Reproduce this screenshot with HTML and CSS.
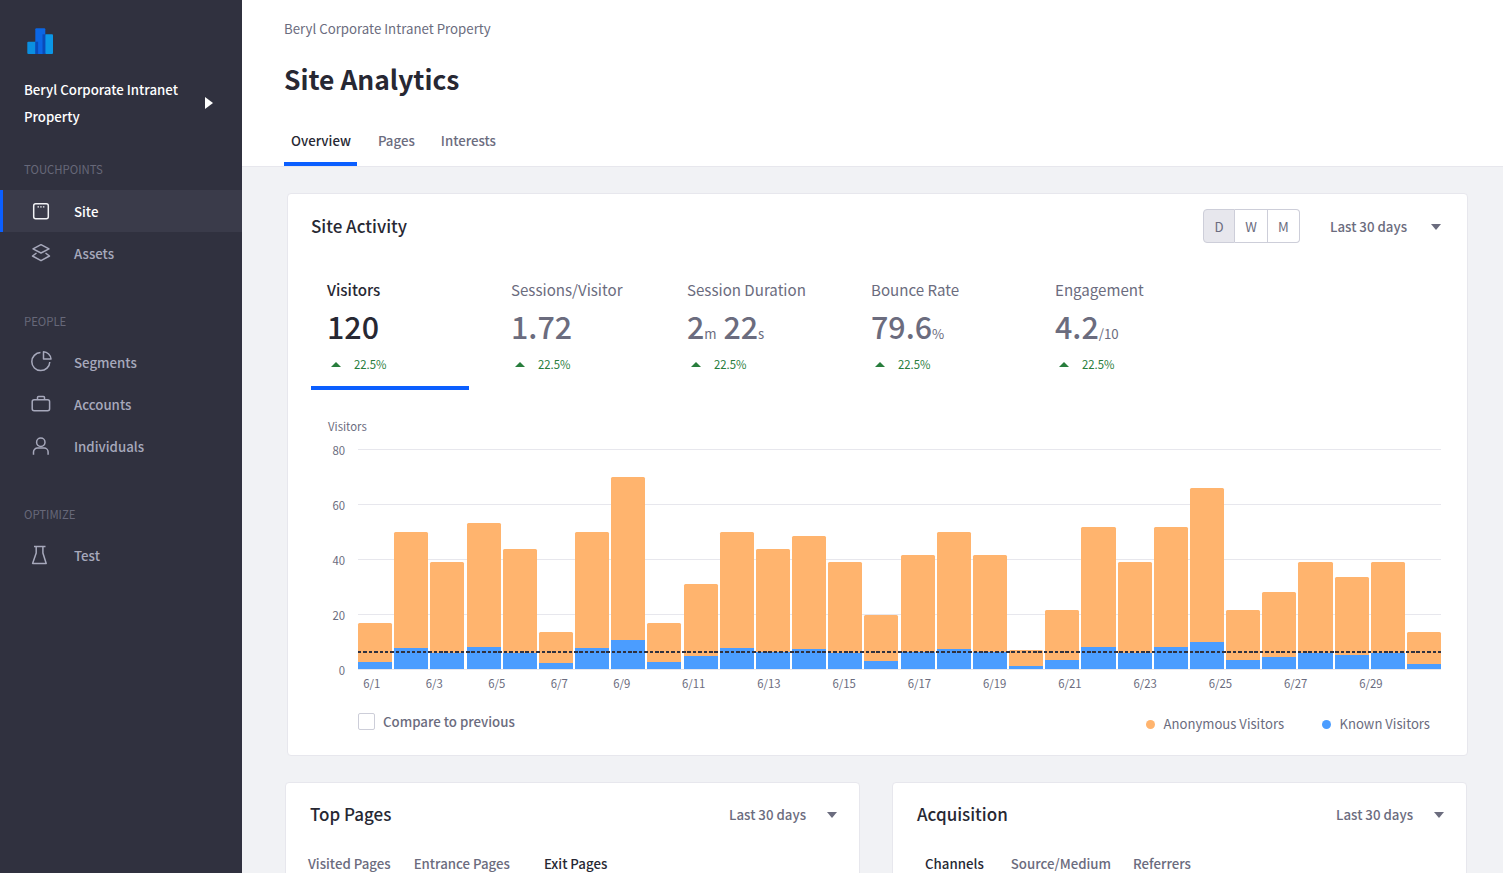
FILE: index.html
```html
<!DOCTYPE html>
<html lang="en">
<head>
<meta charset="utf-8">
<title>Site Analytics</title>
<link rel="stylesheet" href="styles.css">
</head>
<body>
<div class="app">
  <aside class="sidebar">
    <svg class="logo" width="26" height="26" viewBox="0 0 26 26"><rect x="0.3" y="13.7" width="9" height="12.3" rx="1" fill="#0b8fe0"/><rect x="18" y="6.3" width="8" height="19.7" rx="1" fill="#0b97e6"/><rect x="8.3" y="0.3" width="10" height="25.7" rx="1" fill="#0b66e4"/><rect x="8.3" y="13.7" width="2.8" height="12.3" fill="#0a4bb8"/><rect x="15.5" y="6.3" width="2.8" height="19.7" fill="#0a4bb8"/></svg>
    <div class="property">
      <div class="property-name">Beryl Corporate Intranet Property</div>
      <span class="property-caret"></span>
    </div>
    <div class="nav-label nav-label-first">TOUCHPOINTS</div>
    <a class="nav-item active"><svg class="nav-icon" width="22" height="22" viewBox="0 0 22 22"><rect x="3.7" y="3.7" width="14.6" height="15" rx="2"/><path class="dots" d="M7.5 6.9h7"/></svg>Site</a>
    <a class="nav-item"><svg class="nav-icon" width="22" height="22" viewBox="0 0 22 22"><path d="M11 2.7L19 6.9L11 11L3 6.9Z"/><path d="M6.5 11L2.5 14L11 18.7L19.5 14L15.5 11"/></svg>Assets</a>
    <div class="nav-label">PEOPLE</div>
    <a class="nav-item"><svg class="nav-icon" width="22" height="22" viewBox="0 0 22 22"><path d="M10.5 1.6A9 9 0 1 0 19.8 11"/><path d="M13.5 .8A7.7 7.7 0 0 1 21 8H13.5Z"/></svg>Segments</a>
    <a class="nav-item"><svg class="nav-icon" width="22" height="22" viewBox="0 0 22 22"><rect x="2.2" y="6.7" width="17.4" height="11" rx="2"/><path d="M7.5 6.5V4.5a1 1 0 0 1 1-1h5a1 1 0 0 1 1 1V6.5"/></svg>Accounts</a>
    <a class="nav-item"><svg class="nav-icon" width="22" height="22" viewBox="0 0 22 22"><circle cx="10.8" cy="7.3" r="4.2"/><path d="M3.5 19.7V17a4 4 0 0 1 4-4h6.6a4 4 0 0 1 4 4v2.7"/></svg>Individuals</a>
    <div class="nav-label">OPTIMIZE</div>
    <a class="nav-item"><svg class="nav-icon" width="22" height="22" viewBox="0 0 22 22"><path d="M4 2.4H15.5M6.2 2.4V9L2.6 19.4H16.2L12.9 9V2.4"/></svg>Test</a>
  </aside>

  <div class="content">
    <header class="page-header">
      <div class="breadcrumb">Beryl Corporate Intranet Property</div>
      <h1 class="page-title">Site Analytics</h1>
      <nav class="page-tabs">
        <a class="page-tab selected">Overview</a>
        <a class="page-tab">Pages</a>
        <a class="page-tab">Interests</a>
      </nav>
    </header>

    <main class="main">
      <section class="card activity">
        <div class="card-head">
          <h2 class="card-title">Site Activity</h2>
          <div class="card-tools">
            <div class="segmented">
              <span class="segment on">D</span><span class="segment">W</span><span class="segment">M</span>
            </div>
            <div class="range range-wide"><span>Last 30 days</span><i class="caret"></i></div>
          </div>
        </div>

        <div class="metrics">
          <div class="metric selected">
            <div class="metric-name">Visitors</div>
            <div class="metric-value">120</div>
            <div class="metric-delta"><i class="up"></i>22.5%</div>
          </div>
          <div class="metric">
            <div class="metric-name">Sessions/Visitor</div>
            <div class="metric-value">1.72</div>
            <div class="metric-delta"><i class="up"></i>22.5%</div>
          </div>
          <div class="metric">
            <div class="metric-name">Session Duration</div>
            <div class="metric-value">2<small>m</small> 22<small>s</small></div>
            <div class="metric-delta"><i class="up"></i>22.5%</div>
          </div>
          <div class="metric">
            <div class="metric-name">Bounce Rate</div>
            <div class="metric-value">79.6<small>%</small></div>
            <div class="metric-delta"><i class="up"></i>22.5%</div>
          </div>
          <div class="metric">
            <div class="metric-name">Engagement</div>
            <div class="metric-value">4.2<small>/10</small></div>
            <div class="metric-delta"><i class="up"></i>22.5%</div>
          </div>
        </div>

        <div class="chart">
          <div class="chart-label">Visitors</div>
          <div class="chart-body">
            <div class="y-axis"><span>80</span><span>60</span><span>40</span><span>20</span><span>0</span></div>
            <div class="plot">
              <div class="grid"><i></i><i></i><i></i><i></i><i></i></div>
              <div class="bars">
                <div class="bar" style="height:46px"><div class="known" style="height:7px"></div></div>
                <div class="bar" style="height:137px"><div class="known" style="height:21px"></div></div>
                <div class="bar" style="height:107px"><div class="known" style="height:16px"></div></div>
                <div class="bar" style="height:146px"><div class="known" style="height:22px"></div></div>
                <div class="bar" style="height:120px"><div class="known" style="height:16px"></div></div>
                <div class="bar" style="height:37px"><div class="known" style="height:6px"></div></div>
                <div class="bar" style="height:137px"><div class="known" style="height:21px"></div></div>
                <div class="bar" style="height:192px"><div class="known" style="height:29px"></div></div>
                <div class="bar" style="height:46px"><div class="known" style="height:7px"></div></div>
                <div class="bar" style="height:85px"><div class="known" style="height:13px"></div></div>
                <div class="bar" style="height:137px"><div class="known" style="height:21px"></div></div>
                <div class="bar" style="height:120px"><div class="known" style="height:17px"></div></div>
                <div class="bar" style="height:133px"><div class="known" style="height:20px"></div></div>
                <div class="bar" style="height:107px"><div class="known" style="height:16px"></div></div>
                <div class="bar" style="height:54px"><div class="known" style="height:8px"></div></div>
                <div class="bar" style="height:114px"><div class="known" style="height:17px"></div></div>
                <div class="bar" style="height:137px"><div class="known" style="height:20px"></div></div>
                <div class="bar" style="height:114px"><div class="known" style="height:17px"></div></div>
                <div class="bar" style="height:19px"><div class="known" style="height:3px"></div></div>
                <div class="bar" style="height:59px"><div class="known" style="height:9px"></div></div>
                <div class="bar" style="height:142px"><div class="known" style="height:22px"></div></div>
                <div class="bar" style="height:107px"><div class="known" style="height:16px"></div></div>
                <div class="bar" style="height:142px"><div class="known" style="height:22px"></div></div>
                <div class="bar" style="height:181px"><div class="known" style="height:27px"></div></div>
                <div class="bar" style="height:59px"><div class="known" style="height:9px"></div></div>
                <div class="bar" style="height:77px"><div class="known" style="height:12px"></div></div>
                <div class="bar" style="height:107px"><div class="known" style="height:16px"></div></div>
                <div class="bar" style="height:92px"><div class="known" style="height:14px"></div></div>
                <div class="bar" style="height:107px"><div class="known" style="height:16px"></div></div>
                <div class="bar" style="height:37px"><div class="known" style="height:5px"></div></div>
              </div>
              <div class="avg-line"></div>
            </div>
          </div>
          <div class="x-axis">
            <span class="tick">6/1</span><span class="tick">6/3</span><span class="tick">6/5</span><span class="tick">6/7</span><span class="tick">6/9</span>
            <span class="tick wide first-wide">6/11</span><span class="tick wide">6/13</span><span class="tick wide">6/15</span><span class="tick wide">6/17</span><span class="tick wide">6/19</span><span class="tick wide">6/21</span><span class="tick wide">6/23</span><span class="tick wide">6/25</span><span class="tick wide">6/27</span><span class="tick wide">6/29</span>
          </div>
          <div class="chart-foot">
            <label class="compare"><span class="checkbox"></span>Compare to previous</label>
            <div class="legend">
              <span class="legend-item"><i class="dot orange"></i>Anonymous Visitors</span>
              <span class="legend-item"><i class="dot blue"></i>Known Visitors</span>
            </div>
          </div>
        </div>
      </section>

      <div class="card-row">
        <section class="card small-card">
          <div class="card-head small-head">
            <h2 class="card-title">Top Pages</h2>
            <div class="range"><span>Last 30 days</span><i class="caret"></i></div>
          </div>
          <nav class="card-tabs">
            <a class="card-tab tab-visited">Visited Pages</a>
            <a class="card-tab tab-entrance">Entrance Pages</a>
            <a class="card-tab selected">Exit Pages</a>
          </nav>
        </section>
        <section class="card small-card">
          <div class="card-head small-head">
            <h2 class="card-title">Acquisition</h2>
            <div class="range"><span>Last 30 days</span><i class="caret"></i></div>
          </div>
          <nav class="card-tabs acquisition-tabs">
            <a class="card-tab selected tab-channels">Channels</a>
            <a class="card-tab tab-source">Source/Medium</a>
            <a class="card-tab">Referrers</a>
          </nav>
        </section>
      </div>
    </main>
  </div>
</div>
</body>
</html>
```

FILE: styles.css
```css
* { box-sizing: border-box; }
html, body { margin: 0; height: 100%; overflow: hidden; }
body {
  font-family: "Noto Sans CJK SC", "Noto Sans", sans-serif;
  font-size: 13.25px;
  color: #272833;
  background: #f1f2f5;
}
a { display: block; }
h1, h2 { margin: 0; }

.app { display: flex; height: 873px; overflow: hidden; }

/* Sidebar */
.sidebar {
  flex: 0 0 242px;
  background: #30313f;
  color: #a7a9bc;
  padding-top: 28px;
}
.logo { display: block; margin-left: 27px; }
.property {
  display: flex;
  align-items: center;
  margin-top: 22px;
  padding-left: 24px;
}
.property-name {
  width: 170px;
  color: #fff;
  font-weight: 500;
  line-height: 27px;
}
.property-caret {
  margin-left: 11px;
  border-left: 8px solid #fff;
  border-top: 6px solid transparent;
  border-bottom: 6px solid transparent;
}
.nav-label {
  margin: 39px 0 12px 24px;
  font-size: 11.35px;
  line-height: 16px;
  color: #676879;
}
.nav-label-first { margin-top: 31px; margin-bottom: 13px; }
.nav-item {
  display: flex;
  align-items: center;
  height: 42px;
  border-left: 3px solid transparent;
  padding-left: 26.5px;
  font-weight: 500;
}
.nav-icon {
  flex: none;
  margin-right: 22.5px;
  fill: none;
  stroke: #a7a9bc;
  stroke-width: 1.5;
  stroke-linejoin: round;
}
.nav-item.active {
  background: #3a3b4a;
  border-left-color: #0b5fff;
  color: #fff;
}
.nav-item.active .nav-icon { stroke: #f1f2f5; }
.dots { stroke-dasharray: 1.5 1.2; stroke-width: 1.3; }

/* Header */
.content { flex: 1; min-width: 0; }
.page-header {
  height: 167px;
  background: #fff;
  border-bottom: 1px solid #e7e7ed;
  padding: 19px 0 0 42px;
}
.breadcrumb { line-height: 20px; color: #6b6c7e; }
.page-title {
  margin-top: 20px;
  font-size: 26.4px;
  line-height: 40px;
  font-weight: 700;
}
.page-tabs { display: flex; gap: 14px; margin-top: 23px; }
.page-tab {
  height: 44px;
  padding: 9px 7px 0;
  line-height: 20px;
  font-weight: 500;
  color: #6b6c7e;
}
.page-tab:last-child { margin-left: -2px; }
.page-tab.selected {
  padding-right: 6px;
  color: #272833;
  border-bottom: 4px solid #0b5fff;
}

/* Main */
.main { padding: 26px 35px 0 45px; }
.card {
  background: #fff;
  border: 1px solid #e7e7ed;
  border-radius: 4px;
}
.activity { height: 563px; padding: 14px 26px 0 23px; }
.card-head { display: flex; justify-content: space-between; align-items: center; height: 36px; }
.card-title { font-size: 17px; line-height: 28px; font-weight: 500; }
.card-tools { display: flex; align-items: center; }
.segmented { display: flex; }
.segment {
  width: 32.4px;
  height: 34px;
  border: 1px solid #cdced9;
  border-left-width: 0;
  display: flex;
  align-items: center;
  justify-content: center;
  color: #6b6c7e;
}
.segment:first-child { border-left-width: 1px; border-radius: 4px 0 0 4px; }
.segment:last-child { border-radius: 0 4px 4px 0; }
.segment.on { background: #e7e7ed; }
.range { display: flex; align-items: center; padding-top: 2px; color: #6b6c7e; font-weight: 500; line-height: 20px; }
.range-wide { margin-left: 30px; }
.caret {
  margin-left: 21px;
  border-top: 6px solid #6b6c7e;
  border-left: 5.5px solid transparent;
  border-right: 5.5px solid transparent;
}
.range-wide .caret { margin-left: 24px; }

/* Metrics */
.metrics {
  display: grid;
  grid-template-columns: 184px 176px 184px 184px 1fr;
  margin-top: 17px;
}
.metric {
  height: 129px;
  padding: 16px 0 0 16px;
  color: #6b6c7e;
}
.metric.selected {
  width: 158px;
  color: #272833;
  border-bottom: 4px solid #0b5fff;
}
.metric-name { font-size: 15.1px; line-height: 24px; }
.metric.selected .metric-name { font-weight: 500; }
.metric-value {
  height: 40px;
  margin-top: 5px;
  font-size: 30.4px;
  line-height: 40px;
  font-weight: 500;
}
.metric-value small { font-size: 13.25px; font-weight: 400; }
.metric-delta {
  display: flex;
  align-items: center;
  margin-top: 10px;
  padding-left: 4px;
  font-size: 11.35px;
  line-height: 16px;
  color: #287d3c;
}
.up {
  margin-right: 13px;
  border-bottom: 5px solid #287d3c;
  border-left: 5px solid transparent;
  border-right: 5px solid transparent;
}

/* Chart */
.chart { margin-top: 27px; }
.chart-label { margin-left: 17px; font-size: 11.35px; line-height: 18px; color: #6b6c7e; }
.chart-body { display: flex; margin-top: 14px; }
.y-axis {
  flex: 0 0 47px;
  height: 222px;
  display: flex;
  flex-direction: column;
  justify-content: space-between;
  align-items: flex-end;
  padding: 1px 13px 0 0;
  font-size: 11.35px;
  line-height: 1px;
  color: #6b6c7e;
}
.plot { position: relative; flex: 0 0 1083px; height: 221px; }
.grid {
  position: absolute;
  inset: 0;
  display: flex;
  flex-direction: column;
  justify-content: space-between;
}
.grid i { display: block; height: 1px; background: #e7e7ed; }
.bars {
  position: absolute;
  inset: 0 0 1px 0;
  display: flex;
  align-items: flex-end;
  gap: 2.1px;
}
.bar {
  flex: 1;
  display: flex;
  align-items: flex-end;
  background: #ffb46e;
  border-radius: 1.5px 1.5px 0 0;
}
.known { width: 100%; background: #4b9dff; }
.avg-line {
  position: absolute;
  left: 0;
  right: 0;
  top: 202px;
  height: 2px;
  background: repeating-linear-gradient(90deg, #30313f 0 3.5px, transparent 3.5px 5.4px);
}
.x-axis {
  display: flex;
  margin: 4px 0 0 29.5px;
  font-size: 11.35px;
  line-height: 16px;
  color: #6b6c7e;
}
.tick { flex: 0 0 62.5px; text-align: center; }
.tick.wide { flex-basis: 75.25px; }
.tick.first-wide { margin-left: 3px; }
.chart-foot {
  display: flex;
  justify-content: space-between;
  align-items: center;
  margin: 18px 11px 0 47px;
}
.compare { display: flex; align-items: center; font-weight: 500; color: #6b6c7e; line-height: 20px; }
.checkbox {
  width: 17px;
  height: 17px;
  margin-right: 8px;
  border: 1px solid #cdced9;
  border-radius: 2px;
}
.legend { display: flex; gap: 38px; margin-top: 5px; font-size: 13.1px; color: #6b6c7e; }
.legend-item { display: flex; align-items: center; line-height: 20px; }
.dot { width: 9px; height: 9px; border-radius: 50%; margin-right: 8.5px; }
.orange { background: #ffb46e; }
.blue { background: #4b9dff; }

/* Bottom cards */
.card-row { display: flex; gap: 32px; margin: 26px 0 0 -2px; }
.small-card { flex: 0 0 575px; height: 140px; padding: 13px 22px 0 24px; }
.small-head { height: 36px; }
.card-tabs { display: flex; margin-top: 23px; margin-left: -2px; font-weight: 500; color: #6b6c7e; line-height: 17px; }
.card-tab.selected { color: #272833; }
.tab-visited { margin-right: 23px; }
.tab-entrance { margin-right: 34px; }
.acquisition-tabs { margin-left: 8px; }
.tab-channels { margin-right: 27px; }
.tab-source { margin-right: 22px; }
```
